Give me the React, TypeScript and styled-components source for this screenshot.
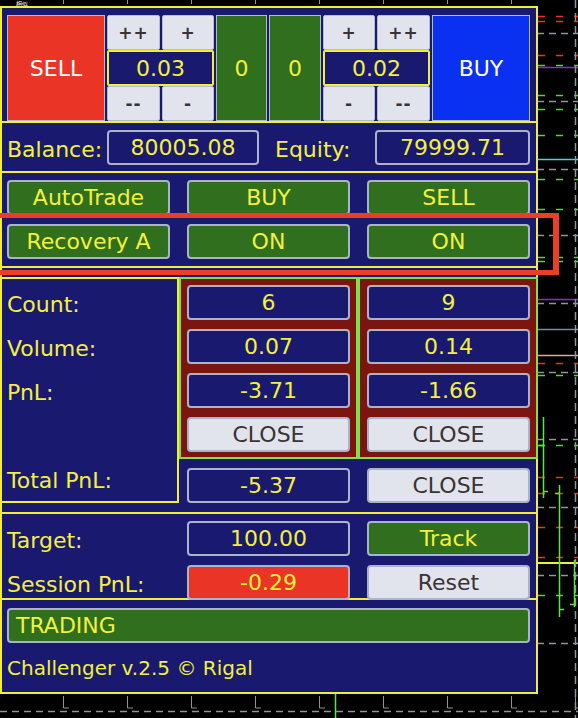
import React from "react";
import styled, { createGlobalStyle, css } from "styled-components";

const Global = createGlobalStyle`
  html, body { margin: 0; padding: 0; background: #000; }
  *, *::before, *::after { box-sizing: border-box; }
`;

const C = {
  navy: "#191970",
  yellow: "#f2ee38",
  text: "#f4f03c",
  green: "#2f6f1e",
  red: "#ea3425",
  blue: "#0a30f2",
  grey: "#e1e4ec",
  edge: "#a9b3c9",
  maroon: "#7c1410",
  lime: "#80e048",
  dark: "#3b3232",
};

type Tone = "navy" | "grey" | "green" | "red" | "sell" | "blue";

const toneCss = (t: Tone) => {
  switch (t) {
    case "grey":
      return css`background: ${C.grey}; color: ${C.dark};`;
    case "green":
      return css`background: ${C.green}; color: ${C.text};`;
    case "red":
      return css`background: ${C.red}; color: ${C.text};`;
    case "sell":
      return css`background: ${C.red}; color: #fff;`;
    case "blue":
      return css`background: ${C.blue}; color: #fff;`;
    default:
      return css`background: ${C.navy}; color: ${C.text};`;
  }
};

const Root = styled.div`
  position: relative;
  width: 578px;
  height: 718px;
  background: #000;
  overflow: hidden;
  font-family: "DejaVu Sans", "Liberation Sans", sans-serif;
`;

const Chart = styled.svg`
  position: absolute;
  left: 0;
  top: 0;
`;

const Panel = styled.div`
  position: relative;
  width: 538px;
  margin-top: 6px;
  display: flex;
  flex-direction: column;
  background: ${C.navy};
  border: 2px solid ${C.yellow};
`;

/* ---------- Section A: trade buttons ---------- */
const TradeGrid = styled.div`
  padding: 7px 6px 0 5px;
  display: grid;
  grid-template-columns: 98px 53px 52px 51px 52px 52px 53px 98px;
  grid-template-rows: 35px 36px 35px;
  column-gap: 2px;
`;

const BigButton = styled.div<{ $tone: Tone; $col: number }>`
  grid-column: ${(p) => p.$col};
  grid-row: 1 / span 3;
  display: flex;
  align-items: center;
  justify-content: center;
  border: 1px solid #b3bccd;
  font-size: 22px;
  ${(p) => toneCss(p.$tone)}
`;

const StepButton = styled.div<{ $col: number; $row: number }>`
  grid-column: ${(p) => p.$col};
  grid-row: ${(p) => p.$row};
  display: flex;
  align-items: center;
  justify-content: center;
  background: ${C.grey};
  border: 1px solid #b3bccd;
  border-radius: 2px;
  color: ${C.dark};
  font-size: 17px;
  font-weight: 700;
  letter-spacing: 1px;
`;

const LotBox = styled.div<{ $col: number }>`
  grid-column: ${(p) => p.$col} / span 2;
  grid-row: 2;
  display: flex;
  align-items: center;
  justify-content: center;
  background: ${C.navy};
  border: 2px solid ${C.yellow};
  border-radius: 2px;
  color: ${C.text};
  font-size: 22px;
`;

/* ---------- generic ---------- */
const Section = styled.div`
  border-top: 2px solid ${C.yellow};
`;

const Tile = styled.div<{ $tone: Tone; $w?: number; $left?: boolean }>`
  position: relative;
  height: 35px;
  width: ${(p) => (p.$w ? `${p.$w}px` : "100%")};
  display: flex;
  align-items: center;
  justify-content: ${(p) => (p.$left ? "flex-start" : "center")};
  padding: 0 ${(p) => (p.$left ? "7px" : "0")};
  border: 2px solid ${C.edge};
  border-radius: 4px;
  font-size: 22px;
  white-space: nowrap;
  ${(p) => toneCss(p.$tone)}
`;

const Label = styled.div<{ $w?: number; $pad?: number }>`
  width: ${(p) => (p.$w ? `${p.$w}px` : "auto")};
  padding-left: ${(p) => p.$pad ?? 0}px;
  padding-top: 3px;
  height: 35px;
  display: flex;
  align-items: center;
  color: ${C.text};
  font-size: 22px;
  white-space: nowrap;
`;

/* ---------- Section B ---------- */
const AccountRow = styled(Section)`
  padding: 7px 6px 6px 5px;
  display: flex;
  align-items: center;
`;

/* ---------- Section C ---------- */
const ModeGrid = styled(Section)`
  padding: 7px 6px 7px 5px;
  display: grid;
  grid-template-columns: repeat(3, 163px);
  column-gap: 17px;
  row-gap: 9px;
`;

/* ---------- Section D ---------- */
const StatsGrid = styled(Section)`
  margin: 0 -2px;
  padding: 9px 0;
  display: grid;
  grid-template-columns: 179px 179px 180px;
  grid-template-rows: 182px 35px;
  row-gap: 9px;
`;

const LabelBox = styled.div`
  grid-column: 1;
  grid-row: 1 / span 2;
  border: 2px solid ${C.yellow};
  padding: 6px 0 0 5px;
  display: grid;
  grid-template-rows: repeat(5, 35px);
  row-gap: 9px;
`;

const SideBox = styled.div<{ $col: number; $padLeft: number }>`
  grid-column: ${(p) => p.$col};
  grid-row: 1;
  background: ${C.maroon};
  border: 2px solid ${C.lime};
  padding: 6px 6px 5px ${(p) => p.$padLeft}px;
  display: grid;
  grid-template-rows: repeat(4, 35px);
  row-gap: 9px;
`;

const TotalCell = styled.div<{ $col: number; $padLeft: number }>`
  grid-column: ${(p) => p.$col};
  grid-row: 2;
  padding-left: ${(p) => p.$padLeft}px;
`;

/* ---------- Section E ---------- */
const TargetGrid = styled(Section)`
  position: relative;
  z-index: 1;
  margin-bottom: -2px;
  padding: 7px 6px 0 5px;
  display: grid;
  grid-template-columns: 180px 180px 163px;
  row-gap: 9px;
`;

/* ---------- Section F ---------- */
const StatusSection = styled(Section)`
  padding: 8px 6px 0 5px;
`;

const Footer = styled.div`
  height: 49px;
  display: flex;
  align-items: center;
  color: ${C.text};
  font-size: 20px;
  white-space: nowrap;
`;

const Annotation = styled.div`
  position: absolute;
  left: -8px;
  top: 213px;
  width: 567px;
  height: 62px;
  border: 5px solid #ea3f26;
  border-right-width: 6px;
  pointer-events: none;
`;

/* ---------- chart background drawing ---------- */
const ChartBackdrop: React.FC = () => {
  const ticks = [63, 127, 191, 255, 319, 383, 447, 511, 575];
  const greyDash = [33, 101, 169, 235, 303, 372, 439, 507, 575, 643];
  const redDash = [16, 21, 55, 363, 477, 493, 527, 557];
  const greenDash = [65, 95, 109, 135, 179, 209, 257, 261, 375, 445, 595];
  return (
    <Chart width={578} height={718} viewBox="0 0 578 718">
      <text x={16} y={5.5} fill="#ffffff" fontSize={6} fontFamily="Noto Sans CJK SC, sans-serif">
        相似
      </text>
      {ticks.map((x) => (
        <line key={`t${x}`} x1={x + 0.5} y1={0} x2={x + 0.5} y2={4} stroke="#8c949c" strokeWidth={1} />
      ))}
      {greyDash.map((y) => (
        <line key={`g${y}`} x1={537} y1={y + 0.5} x2={578} y2={y + 0.5} stroke="#8c949c" strokeWidth={1.5} strokeDasharray="7 5" />
      ))}
      {redDash.map((y) => (
        <line key={`r${y}`} x1={538} y1={y + 0.5} x2={578} y2={y + 0.5} stroke="#ff2a1a" strokeWidth={1.5} strokeDasharray="7 11" />
      ))}
      {greenDash.map((y) => (
        <line key={`e${y}`} x1={538} y1={y + 0.5} x2={578} y2={y + 0.5} stroke="#5ad23a" strokeWidth={1.5} strokeDasharray="7 11" />
      ))}
      <line x1={537} y1={67.5} x2={578} y2={67.5} stroke="#8a2cc8" strokeWidth={1.5} />
      <line x1={537} y1={299.5} x2={578} y2={299.5} stroke="#8a2cc8" strokeWidth={1.5} />
      <line x1={537} y1={159.5} x2={578} y2={159.5} stroke="#40d4e4" strokeWidth={1.5} />
      <line x1={537} y1={329.5} x2={578} y2={329.5} stroke="#7c8a98" strokeWidth={1.5} />
      <line x1={537} y1={355.5} x2={578} y2={355.5} stroke="#e0a4a4" strokeWidth={1.5} />
      <line x1={537} y1={563} x2={578} y2={563} stroke="#f2ee38" strokeWidth={2} />
      <line x1={575.5} y1={0} x2={575.5} y2={718} stroke="#8c949c" strokeWidth={1.5} strokeDasharray="8 5" />
      <g stroke="#5ae83a" strokeWidth={1.5}>
        <line x1={543.5} y1={417} x2={543.5} y2={498} />
        <line x1={539} y1={445.5} x2={543.5} y2={445.5} />
        <line x1={543.5} y1={491.5} x2={548} y2={491.5} />
        <line x1={559.5} y1={485} x2={559.5} y2={617} />
        <line x1={555} y1={493.5} x2={559.5} y2={493.5} />
        <line x1={559.5} y1={609.5} x2={564} y2={609.5} />
        <line x1={574.5} y1={560} x2={574.5} y2={607} />
        <line x1={570} y1={604.5} x2={574.5} y2={604.5} />
        <line x1={335.5} y1={694} x2={335.5} y2={718} />
      </g>
      {ticks.map((x) => (
        <path key={`b${x}`} d={`M${x + 0.5} 696 V708 H${x + 6}`} stroke="#8c949c" strokeWidth={1} fill="none" />
      ))}
      <line x1={0} y1={711.5} x2={578} y2={711.5} stroke="#8c949c" strokeWidth={1.5} strokeDasharray="7 5" />
    </Chart>
  );
};

export default function App() {
  return (
    <Root>
      <Global />
      <ChartBackdrop />
      <Panel>
        <TradeGrid>
          <BigButton $tone="sell" $col={1}>SELL</BigButton>
          <StepButton $col={2} $row={1}>++</StepButton>
          <StepButton $col={3} $row={1}>+</StepButton>
          <LotBox $col={2}>0.03</LotBox>
          <StepButton $col={2} $row={3}>--</StepButton>
          <StepButton $col={3} $row={3}>-</StepButton>
          <BigButton $tone="green" $col={4}>0</BigButton>
          <BigButton $tone="green" $col={5}>0</BigButton>
          <StepButton $col={6} $row={1}>+</StepButton>
          <StepButton $col={7} $row={1}>++</StepButton>
          <LotBox $col={6}>0.02</LotBox>
          <StepButton $col={6} $row={3}>-</StepButton>
          <StepButton $col={7} $row={3}>--</StepButton>
          <BigButton $tone="blue" $col={8}>BUY</BigButton>
        </TradeGrid>

        <AccountRow>
          <Label $w={100}>Balance:</Label>
          <Tile $tone="navy" $w={152}>80005.08</Tile>
          <Label $w={116} $pad={16}>Equity:</Label>
          <Tile $tone="navy" $w={155}>79999.71</Tile>
        </AccountRow>

        <ModeGrid>
          <Tile $tone="green">AutoTrade</Tile>
          <Tile $tone="green">BUY</Tile>
          <Tile $tone="green">SELL</Tile>
          <Tile $tone="green">Recovery A</Tile>
          <Tile $tone="green">ON</Tile>
          <Tile $tone="green">ON</Tile>
        </ModeGrid>

        <StatsGrid>
          <LabelBox>
            <Label>Count:</Label>
            <Label>Volume:</Label>
            <Label>PnL:</Label>
            <Label />
            <Label>Total PnL:</Label>
          </LabelBox>
          <SideBox $col={2} $padLeft={6}>
            <Tile $tone="navy">6</Tile>
            <Tile $tone="navy">0.07</Tile>
            <Tile $tone="navy">-3.71</Tile>
            <Tile $tone="grey">CLOSE</Tile>
          </SideBox>
          <SideBox $col={3} $padLeft={7}>
            <Tile $tone="navy">9</Tile>
            <Tile $tone="navy">0.14</Tile>
            <Tile $tone="navy">-1.66</Tile>
            <Tile $tone="grey">CLOSE</Tile>
          </SideBox>
          <TotalCell $col={2} $padLeft={8}>
            <Tile $tone="navy" $w={163}>-5.37</Tile>
          </TotalCell>
          <TotalCell $col={3} $padLeft={9}>
            <Tile $tone="grey" $w={163}>CLOSE</Tile>
          </TotalCell>
        </StatsGrid>

        <TargetGrid>
          <Label>Target:</Label>
          <Tile $tone="navy" $w={163}>100.00</Tile>
          <Tile $tone="green">Track</Tile>
          <Label>Session PnL:</Label>
          <Tile $tone="red" $w={163}>-0.29</Tile>
          <Tile $tone="grey">Reset</Tile>
        </TargetGrid>

        <StatusSection>
          <Tile $tone="green" $left>TRADING</Tile>
          <Footer>Challenger v.2.5 © Rigal</Footer>
        </StatusSection>
      </Panel>
      <Annotation />
    </Root>
  );
}
